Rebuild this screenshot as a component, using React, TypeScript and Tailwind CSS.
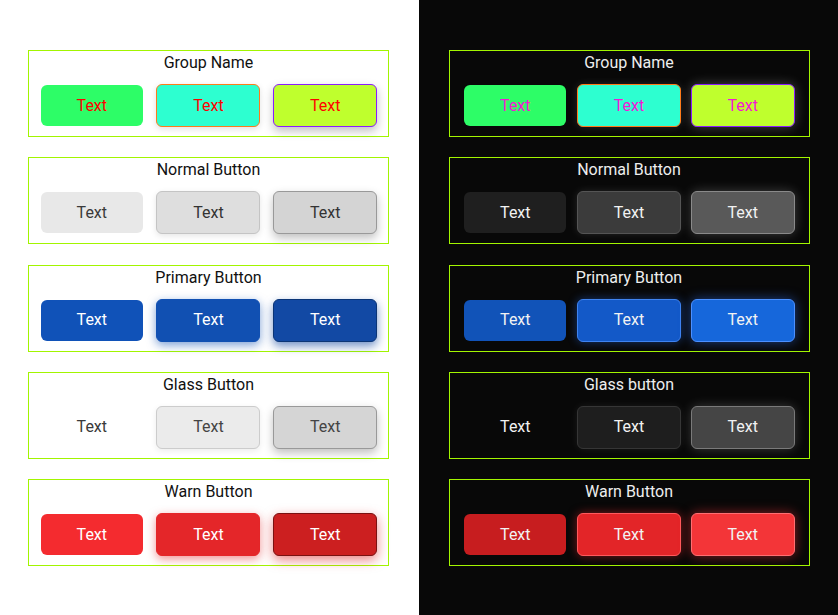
import React from 'react'

type Group = { title: string; buttons: string[] }

const base = 'flex items-center justify-center rounded-[6px] text-[16px] leading-none'
const plain = 'w-[102px] h-[41px]'
const bordered = 'w-[104px] h-[43px] border'

const lightGroups: Group[] = [
  {
    title: 'Group Name',
    buttons: [
      `${plain} bg-[#2dfd67] text-[#ff0000]`,
      `${bordered} bg-[#2dffd0] border-[#ff7a1a] text-[#ff0000] shadow-[0_2px_6px_rgba(0,0,0,0.12)]`,
      `${bordered} bg-[#bfff2d] border-[#8a1cff] text-[#ff0000] shadow-[0_4px_10px_rgba(0,0,0,0.25)]`,
    ],
  },
  {
    title: 'Normal Button',
    buttons: [
      `${plain} bg-[#e8e8e8] text-[#3a3a3a]`,
      `${bordered} bg-[#dedede] border-[#c4c4c4] text-[#333333] shadow-[0_2px_6px_rgba(0,0,0,0.1)]`,
      `${bordered} bg-[#d4d4d4] border-[#999999] text-[#333333] shadow-[0_4px_10px_rgba(0,0,0,0.25)]`,
    ],
  },
  {
    title: 'Primary Button',
    buttons: [
      `${plain} bg-[#1052b8] text-white`,
      `${bordered} bg-[#1150b2] border-[#1150b2] text-white shadow-[0_3px_10px_rgba(17,80,178,0.55)]`,
      `${bordered} bg-[#1249a4] border-[#0b3576] text-white shadow-[0_4px_10px_rgba(17,70,160,0.6)]`,
    ],
  },
  {
    title: 'Glass Button',
    buttons: [
      `${plain} bg-transparent text-[#3a3a3a]`,
      `${bordered} bg-[#ebebeb] border-[#cccccc] text-[#444444] shadow-[0_2px_6px_rgba(0,0,0,0.08)]`,
      `${bordered} bg-[#d5d5d5] border-[#999999] text-[#444444] shadow-[0_4px_10px_rgba(0,0,0,0.25)]`,
    ],
  },
  {
    title: 'Warn Button',
    buttons: [
      `${plain} bg-[#f42b2f] text-white`,
      `${bordered} bg-[#e42629] border-[#e42629] text-white shadow-[0_3px_10px_rgba(228,38,41,0.5)]`,
      `${bordered} bg-[#cc1f20] border-[#7a1212] text-white shadow-[0_4px_12px_rgba(220,30,32,0.55)]`,
    ],
  },
]

const darkGroups: Group[] = [
  {
    title: 'Group Name',
    buttons: [
      `${plain} bg-[#2dfd67] text-[#f516d6]`,
      `${bordered} bg-[#2dffd0] border-[#ff7a1a] text-[#f516d6] shadow-[0_0_8px_rgba(255,255,255,0.12)]`,
      `${bordered} bg-[#bfff2d] border-[#8a1cff] text-[#f516d6] shadow-[0_0_12px_rgba(255,255,255,0.25)]`,
    ],
  },
  {
    title: 'Normal Button',
    buttons: [
      `${plain} bg-[#1f1f1f] text-[#f2f2f2]`,
      `${bordered} bg-[#3b3b3b] border-[#555555] text-[#f2f2f2] shadow-[0_0_8px_rgba(255,255,255,0.12)]`,
      `${bordered} bg-[#595959] border-[#8a8a8a] text-[#f2f2f2] shadow-[0_0_12px_rgba(255,255,255,0.22)]`,
    ],
  },
  {
    title: 'Primary Button',
    buttons: [
      `${plain} bg-[#1153b8] text-[#f2f2f2]`,
      `${bordered} bg-[#1359c8] border-[#3f83f0] text-[#f2f2f2] shadow-[0_0_10px_rgba(40,110,240,0.45)]`,
      `${bordered} bg-[#1667db] border-[#4c90ff] text-[#f2f2f2] shadow-[0_0_12px_rgba(50,120,255,0.5)]`,
    ],
  },
  {
    title: 'Glass button',
    buttons: [
      `${plain} bg-transparent text-[#f2f2f2]`,
      `${bordered} bg-[#1e1e1e] border-[#363636] text-[#f2f2f2] shadow-[0_0_8px_rgba(255,255,255,0.08)]`,
      `${bordered} bg-[#454545] border-[#7a7a7a] text-[#f2f2f2] shadow-[0_0_12px_rgba(255,255,255,0.2)]`,
    ],
  },
  {
    title: 'Warn Button',
    buttons: [
      `${plain} bg-[#c71d1f] text-[#f2f2f2]`,
      `${bordered} bg-[#e32528] border-[#ff5a5d] text-[#f2f2f2] shadow-[0_0_10px_rgba(240,40,44,0.5)]`,
      `${bordered} bg-[#f33538] border-[#ff6f72] text-[#f2f2f2] shadow-[0_0_12px_rgba(245,50,54,0.55)]`,
    ],
  },
]

const GroupBox: React.FC<{ group: Group; dark: boolean }> = ({ group, dark }) => (
  <div className="w-[361px] h-[87px] border border-[#a2f500] flex flex-col">
    <div className={`pt-[2px] h-[22px] leading-[20px] text-center text-[16px] ${dark ? 'text-[#eeeeee]' : 'text-[#111111]'}`}>
      {group.title}
    </div>
    <div className={`mt-[11px] h-[43px] grid grid-cols-3 items-center ${dark ? 'px-[9px]' : 'px-[4.5px]'}`}>
      {group.buttons.map((cls, i) => (
        <div key={i} className="flex justify-center">
          <button className={`${base} ${cls}`}>Text</button>
        </div>
      ))}
    </div>
  </div>
)

const Side: React.FC<{ dark: boolean }> = ({ dark }) => {
  const groups = dark ? darkGroups : lightGroups
  return (
    <div className={`w-[419px] h-[615px] pt-[50px] flex flex-col gap-[20.25px] ${dark ? 'bg-[#080808] items-center pl-[1px]' : 'bg-white pl-[28px]'}`}>
      {groups.map((g) => (
        <GroupBox key={g.title} group={g} dark={dark} />
      ))}
    </div>
  )
}

export default function App() {
  return (
    <div className="flex w-[838px] h-[615px] overflow-hidden" style={{ fontFamily: 'Roboto, "Liberation Sans", sans-serif' }}>
      <Side dark={false} />
      <Side dark={true} />
    </div>
  )
}
